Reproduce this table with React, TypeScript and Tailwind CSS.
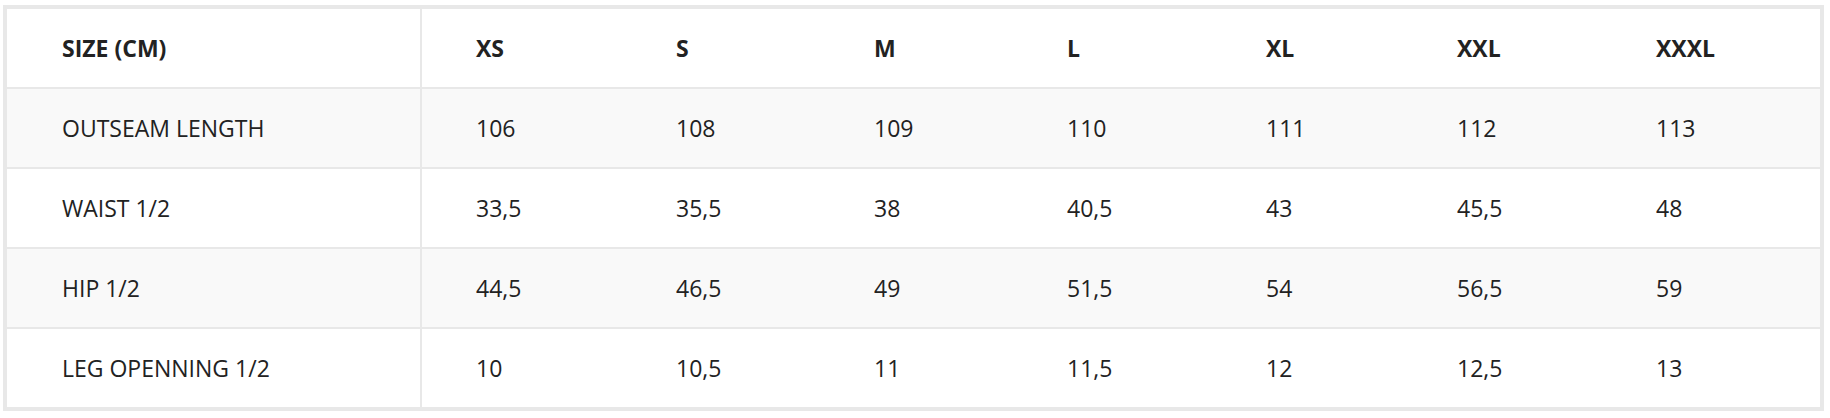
import React from "react";

const headers = ["SIZE (CM)", "XS", "S", "M", "L", "XL", "XXL", "XXXL"];
const rows: string[][] = [
  ["OUTSEAM LENGTH", "106", "108", "109", "110", "111", "112", "113"],
  ["WAIST 1/2", "33,5", "35,5", "38", "40,5", "43", "45,5", "48"],
  ["HIP 1/2", "44,5", "46,5", "49", "51,5", "54", "56,5", "59"],
  ["LEG OPENNING 1/2", "10", "10,5", "11", "11,5", "12", "12,5", "13"],
];
const widths = [415, 200, 198, 193, 199, 191, 199, 218];

export default function App() {
  return (
    <div className="w-[1830px] h-[418px] bg-white pt-[5px] pl-[3px]" style={{ fontFamily: '"Open Sans", "Noto Sans", sans-serif' }}>
      <div className="w-[1821px] border-4 border-[#e8e8e8] text-[#222] text-[23px]">
        <table className="w-full table-fixed border-separate border-spacing-0">
          <colgroup>
            {widths.map((w, i) => (
              <col key={i} style={{ width: w }} />
            ))}
          </colgroup>
          <thead>
            <tr className="bg-white">
              {headers.map((h, i) => (
                <th
                  key={h}
                  className={`h-[80px] border-b-2 border-[#e8e8e8] text-left font-bold align-middle ${i === 0 ? "pl-[55px] border-r-2" : "pl-[54px]"}`}
                >
                  {h}
                </th>
              ))}
            </tr>
          </thead>
          <tbody>
            {rows.map((r, ri) => (
              <tr key={ri} className={ri % 2 === 0 ? "bg-[#f9f9f9]" : "bg-white"}>
                {r.map((c, ci) => (
                  <td
                    key={ci}
                    className={`${ri < rows.length - 1 ? "h-[80px] border-b-2" : "h-[78px]"} border-[#e8e8e8] align-middle font-normal ${ci === 0 ? "pl-[55px] border-r-2" : "pl-[54px]"}`}
                  >
                    {c}
                  </td>
                ))}
              </tr>
            ))}
          </tbody>
        </table>
      </div>
    </div>
  );
}
